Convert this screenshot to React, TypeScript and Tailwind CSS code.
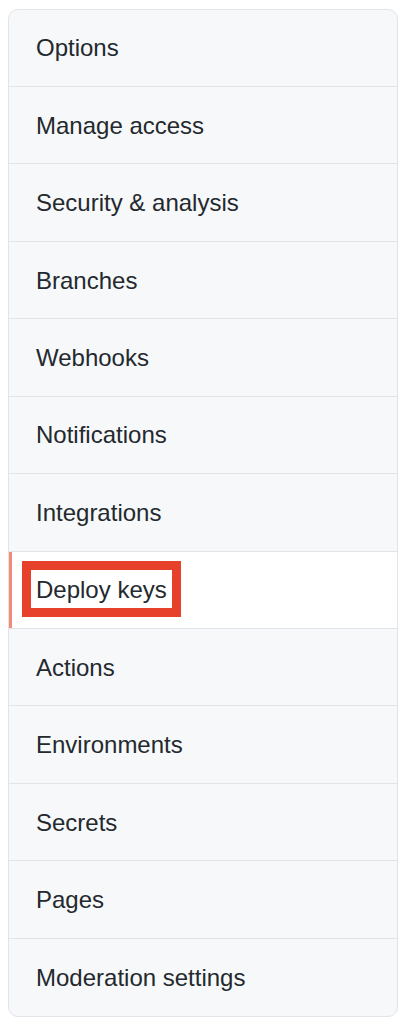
const items = [
  'Options',
  'Manage access',
  'Security & analysis',
  'Branches',
  'Webhooks',
  'Notifications',
  'Integrations',
  'Deploy keys',
  'Actions',
  'Environments',
  'Secrets',
  'Pages',
  'Moderation settings',
];

const App = () => {
  const selected = 'Deploy keys';

  return (
    <div
      className="min-h-screen bg-white pt-[8.5px] pl-[7.5px] pr-[6px]"
      style={{ fontFamily: '"Liberation Sans", Arial, sans-serif' }}
    >
      <nav className="w-[390.5px] rounded-[10px] border border-[#e1e4e8] overflow-hidden bg-[#f6f8fa]">
        {items.map((item, i) => {
          const active = item === selected;
          return (
            <div
              key={item}
              className={
                'relative flex items-center h-[77.45px] pl-[27.5px] pt-[1px] text-[24px] text-[#24292e] ' +
                (i < items.length - 1 ? 'border-b border-[#e1e4e8] ' : '') +
                (active ? 'bg-white' : '')
              }
            >
              {active && (
                <span className="absolute left-0 top-0 bottom-0 w-[3.5px] bg-[#f28b73]" />
              )}
              <span className="relative leading-none">
                {item}
                {active && (
                  <span className="absolute left-[-14px] top-[-17px] w-[159px] h-[56px] border-[9px] border-[#e8412b]" />
                )}
              </span>
            </div>
          );
        })}
      </nav>
    </div>
  );
};

export default App;
